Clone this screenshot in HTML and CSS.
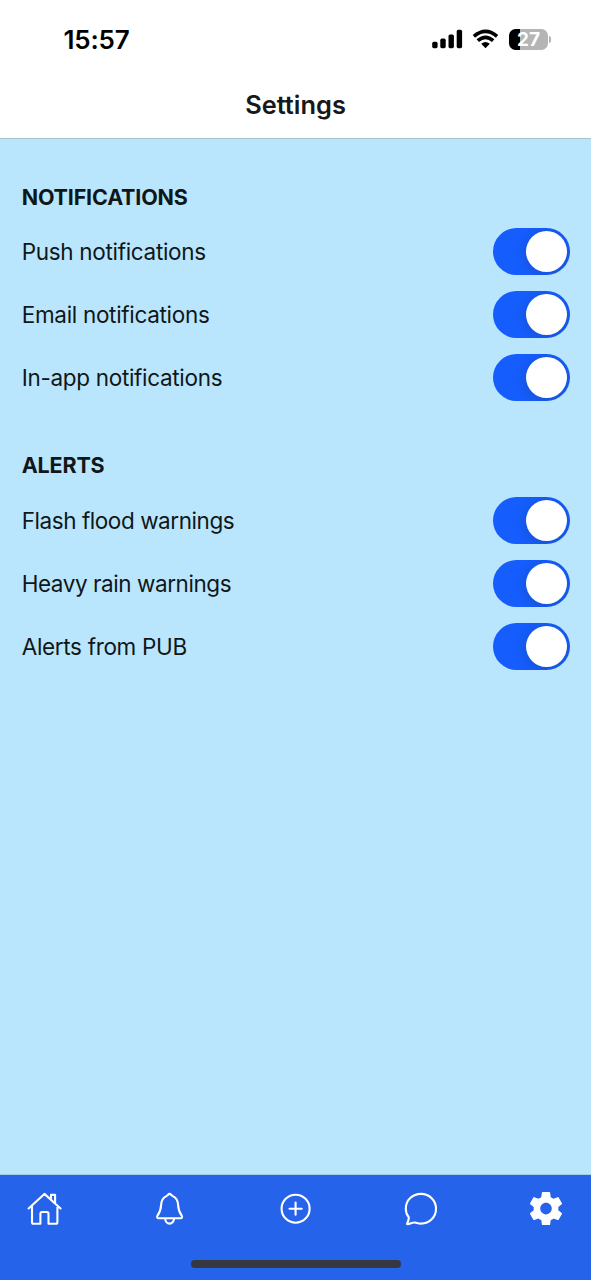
FILE: index.html
```html
<!DOCTYPE html>
<html lang="en">
<head>
<meta charset="utf-8">
<title>Settings</title>
<link rel="stylesheet" href="styles.css">
</head>
<body>
<div class="screen">
  <div class="status">
    <span class="time">15:57</span>
    <div class="indicators">
      <svg class="signal" width="31" height="20" viewBox="0 0 31 20"><rect x="0.2" y="12.8" width="5.4" height="6.4" rx="1.6"/><rect x="8.3" y="9.6" width="5.4" height="9.6" rx="1.6"/><rect x="16.5" y="5.4" width="5.4" height="13.8" rx="1.6"/><rect x="24.7" y="0.8" width="5.4" height="18.4" rx="1.6"/></svg>
      <svg class="wifi" width="26" height="20" viewBox="0 0 26 20"><path d="M1.9 7.4Q13.5-2.6 25.1 7.4M5.8 11.6Q13.5 5 21.2 11.6" fill="none" stroke="#000" stroke-width="3.7"/><path d="M9.2 14.8Q13.5 11.4 17.8 14.8L13.5 19.2Z"/></svg>
      <div class="battery"><span class="cell">27</span><span class="cap"></span></div>
    </div>
  </div>
  <header class="title">Settings</header>
  <main class="content">
    <section class="group">
      <h2 class="heading">NOTIFICATIONS</h2>
      <div class="row"><span class="label">Push notifications</span><span class="toggle"><span class="knob"></span></span></div>
      <div class="row"><span class="label">Email notifications</span><span class="toggle"><span class="knob"></span></span></div>
      <div class="row"><span class="label">In-app notifications</span><span class="toggle"><span class="knob"></span></span></div>
    </section>
    <section class="group alerts">
      <h2 class="heading">ALERTS</h2>
      <div class="row"><span class="label">Flash flood warnings</span><span class="toggle"><span class="knob"></span></span></div>
      <div class="row"><span class="label">Heavy rain warnings</span><span class="toggle"><span class="knob"></span></span></div>
      <div class="row"><span class="label">Alerts from PUB</span><span class="toggle"><span class="knob"></span></span></div>
    </section>
  </main>
  <nav class="tabs">
    <div class="icons">
      <svg class="icon" viewBox="0 0 36 36"><path d="M1.6 17.5L17.4 2.9L33.6 17.5M5 14.8V31.2Q5 32.7 6.5 32.7H13.4V22.7Q13.4 21 15.1 21H19.8Q21.5 21 21.5 22.7V32.7H28.9Q30.4 32.7 30.4 31.2V14.8M24 8.6V3.9H28.1V12.4"/></svg>
      <svg class="icon" viewBox="0 0 36 36"><path d="M17.6 2.9C16.2 2.9 15.8 4.5 14.4 5.1C10.5 6.8 9.3 9.8 9.1 14C8.9 19.3 8 21.3 5.5 24.7C4.6 26 5.3 27.2 6.7 27.2H28.5C29.9 27.2 30.6 26 29.7 24.7C27.2 21.3 26.3 19.3 26.1 14C25.9 9.8 24.7 6.8 20.8 5.1C19.4 4.5 19 2.9 17.6 2.9ZM13.2 27.2C13.2 34.4 22 34.4 22 27.2"/></svg>
      <svg class="icon" viewBox="0 0 36 36"><circle cx="17.6" cy="17.7" r="14"/><path d="M17.6 11.6V23.8M11.5 17.7H23.7"/></svg>
      <svg class="icon" viewBox="0 0 36 36"><path d="M5.8 26.2C3.5 23.7 2.8 20.5 2.8 17.7C2.8 9.2 9.5 2.9 18 2.9C26.5 2.9 33 9.5 33 17.7C33 26 26.6 32.6 18 32.6C15.6 32.6 14.4 32 12.1 31.5C9.3 31 7.5 33 4.4 33.3C4 33.3 3.8 33 4.1 32.6C5.3 30.6 5.8 28.5 5.8 26.2Z"/></svg>
      <svg class="icon gear" viewBox="0 0 36 36"><path transform="translate(-1.8 -2.2) scale(1.65)" d="M19.43 12.98c.04-.32.07-.64.07-.98s-.03-.66-.07-.98l2.11-1.65c.19-.15.24-.42.12-.64l-2-3.46c-.12-.22-.39-.3-.61-.22l-2.49 1c-.52-.4-1.08-.73-1.69-.98l-.38-2.65C14.46 2.18 14.25 2 14 2h-4c-.25 0-.46.18-.49.42l-.38 2.65c-.61.25-1.17.59-1.69.98l-2.49-1c-.23-.09-.49 0-.61.22l-2 3.46c-.13.22-.07.49.12.64l2.11 1.65c-.04.32-.07.65-.07.98s.03.66.07.98l-2.11 1.65c-.19.15-.24.42-.12.64l2 3.46c.12.22.39.3.61.22l2.49-1c.52.4 1.08.73 1.69.98l.38 2.65c.03.24.24.42.49.42h4c.25 0 .46-.18.49-.42l.38-2.65c.61-.25 1.17-.59 1.69-.98l2.49 1c.23.09.49 0 .61-.22l2-3.46c.12-.22.07-.49-.12-.64l-2.11-1.65zM12 15.5c-1.93 0-3.5-1.57-3.5-3.5s1.57-3.5 3.5-3.5 3.5 1.57 3.5 3.5-1.57 3.5-3.5 3.5z"/></svg>
    </div>
    <div class="home-bar"></div>
  </nav>
</div>
</body>
</html>
```
FILE: styles.css
```css
* { box-sizing: border-box; }
body { margin: 0; font-family: Inter, "Liberation Sans", sans-serif; color: #101719; }
.screen { width: 591px; height: 1280px; display: flex; flex-direction: column; background: #fff; }
.status { height: 78px; display: flex; justify-content: space-between; padding: 0 40px 0 63.5px; color: #000; }
.time { font-size: 26px; font-weight: 600; line-height: 80px; letter-spacing: -0.2px; }
.indicators { display: flex; align-items: center; height: 78px; }
.wifi { margin-left: 9.5px; }
.battery { display: flex; align-items: center; gap: 1px; margin-left: 11px; }
.cell { width: 39px; height: 21px; border-radius: 6.5px; background: linear-gradient(to right, #000 27%, #b5b5b5 27%); color: #fff; font-size: 19px; font-weight: 700; line-height: 21px; text-align: center; }
.cap { width: 2px; height: 7px; border-radius: 0 3px 3px 0; background: #b5b5b5; }
.title { height: 61px; border-bottom: 1px solid #a9c3d0; font-size: 25.4px; font-weight: 600; line-height: 54px; text-align: center; color: #17181a; }
.content { flex: 1; background: #bae6fd; padding: 36.5px 21px 0 21.7px; }
.group { height: 268.5px; }
.heading { margin: 0; height: 44.5px; font-size: 21.5px; font-weight: 700; line-height: 43px; letter-spacing: -0.17px; }
.row { display: flex; justify-content: space-between; align-items: center; height: 63px; }
.label { font-size: 22.5px; line-height: 30px; letter-spacing: -0.31px; }
.alerts .label { letter-spacing: -0.44px; padding-top: 1px; }
.alerts .row:last-child .label { letter-spacing: -0.33px; }
.toggle { width: 77.5px; height: 47px; border-radius: 24px; padding: 3px; background: #155dfc; display: flex; justify-content: flex-end; overflow: hidden; }
.knob { width: 41px; height: 41px; border-radius: 50%; background: #fff; box-shadow: 0 2px 10px 2px rgba(30, 50, 100, 0.22); }
.tabs { height: 106px; background: #2563eb; border-top: 1px solid #a6cce3; display: flex; flex-direction: column; align-items: center; justify-content: space-between; padding: 16px 27px 12px; }
.icons { width: 100%; display: flex; justify-content: space-between; }
.icon { width: 36px; height: 36px; fill: none; stroke: #fff; stroke-width: 2.1; stroke-linecap: round; stroke-linejoin: round; }
.gear { fill: #fff; stroke: none; }
.home-bar { width: 210px; height: 8px; border-radius: 4px; background: #36383f; }
```
